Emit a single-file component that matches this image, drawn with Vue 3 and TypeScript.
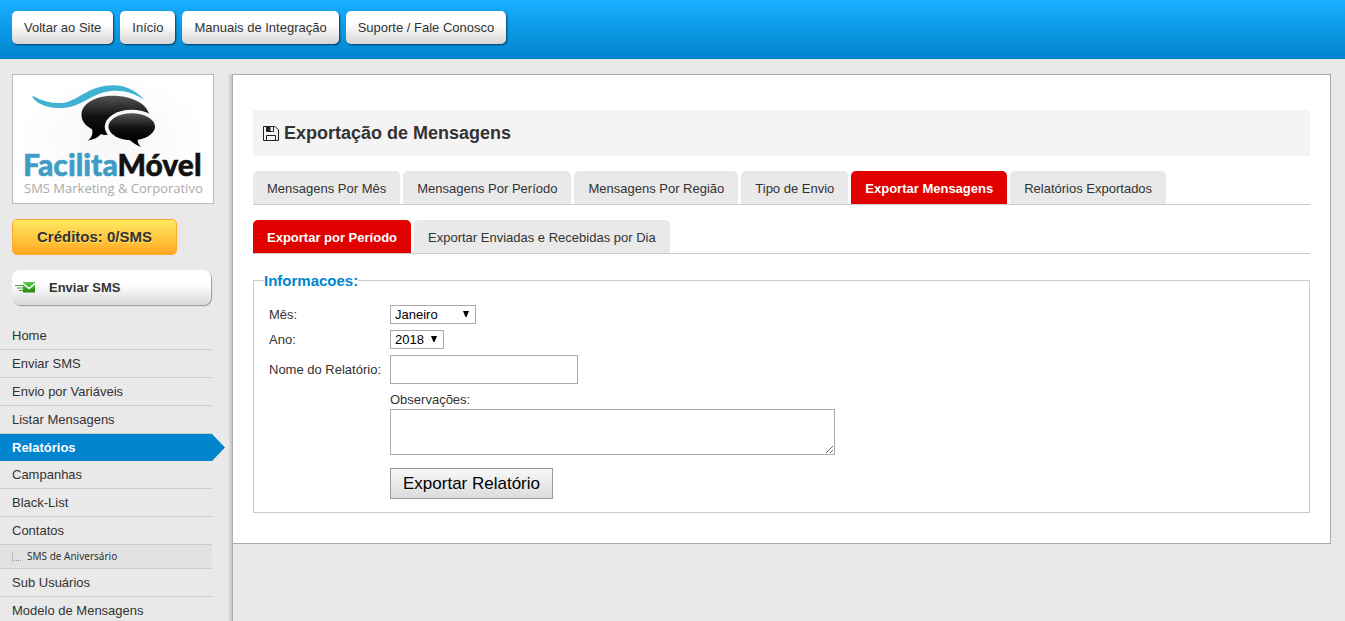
<script setup lang="ts">
import { ref } from 'vue'

interface MenuItem {
  label: string
  active?: boolean
  sub?: boolean
}

const topLinks: string[] = ['Voltar ao Site', 'Início', 'Manuais de Integração', 'Suporte / Fale Conosco']

const menu: MenuItem[] = [
  { label: 'Home' },
  { label: 'Enviar SMS' },
  { label: 'Envio por Variáveis' },
  { label: 'Listar Mensagens' },
  { label: 'Relatórios', active: true },
  { label: 'Campanhas' },
  { label: 'Black-List' },
  { label: 'Contatos' },
  { label: 'SMS de Aniversário', sub: true },
  { label: 'Sub Usuários' },
  { label: 'Modelo de Mensagens' },
]

const tabs: MenuItem[] = [
  { label: 'Mensagens Por Mês' },
  { label: 'Mensagens Por Período' },
  { label: 'Mensagens Por Região' },
  { label: 'Tipo de Envio' },
  { label: 'Exportar Mensagens', active: true },
  { label: 'Relatórios Exportados' },
]

const subTabs: MenuItem[] = [
  { label: 'Exportar por Período', active: true },
  { label: 'Exportar Enviadas e Recebidas por Dia' },
]

const months: string[] = ['Janeiro', 'Fevereiro', 'Março', 'Abril', 'Maio', 'Junho', 'Julho', 'Agosto', 'Setembro', 'Outubro', 'Novembro', 'Dezembro']
const years: string[] = ['2018', '2017', '2016']

const month = ref('Janeiro')
const year = ref('2018')
const reportName = ref('')
const notes = ref('')
</script>

<template>
  <div class="page">
    <header class="topbar">
      <a v-for="link in topLinks" :key="link" href="#" class="top-button">{{ link }}</a>
    </header>

    <div class="layout">
      <aside class="sidebar">
        <a href="#" class="logo" aria-label="Facilita Móvel">
          <svg width="200" height="128" viewBox="0 0 200 128">
            <defs>
              <linearGradient id="bubble" x1="0" y1="0" x2="0" y2="1">
                <stop offset="0" stop-color="#555" />
                <stop offset="0.55" stop-color="#111" />
                <stop offset="1" stop-color="#000" />
              </linearGradient>
              <radialGradient id="paper">
                <stop offset="0" stop-color="#f7f6f6" />
                <stop offset="1" stop-color="#fff" />
              </radialGradient>
            </defs>
            <rect width="200" height="128" fill="url(#paper)" />
            <path d="M79 54 Q81 61 75 65.500 Q84 64 88 59 Q91 60.500 95.500 59.500 L96 54 Z" fill="#000" />
            <path d="M68.500 40 C68.500 28 83 20.700 100 20.700 C119 20.700 134 29 136 39 C134 52 118 59 101 58.500 C82 58.500 68.500 51 68.500 40 Z" fill="url(#bubble)" />
            <ellipse cx="118.700" cy="51.700" rx="27" ry="17" fill="#f9f8f8" />
            <ellipse cx="118.700" cy="51.700" rx="23.300" ry="13.500" fill="url(#bubble)" />
            <path d="M115 63 Q120 69 128 72 Q124 68 124.500 62 Z" fill="#000" />
            <path d="M19.300 20.500 Q33 29 50 28 C62 26 72 16 85 12.500 C104 7.500 118 11 131.500 24.800 C118 16 104 13.500 90 17.500 C76 21.500 66 32 50 33 C34 34 20 27 19.300 20.500 Z" fill="#3fb1d1" />
            <text x="10" y="101" class="logo-name"><tspan fill="#3f9cc4" stroke="#3f9cc4">Facilita</tspan><tspan fill="#111" stroke="#111">Móvel</tspan></text>
            <text x="11" y="118" class="logo-tag">SMS Marketing &amp; Corporativo</text>
          </svg>
        </a>

        <a href="#" class="credits">Créditos: 0/SMS</a>

        <a href="#" class="send">
          <svg width="20" height="11" viewBox="0 0 20 11">
            <defs>
              <linearGradient id="mail" x1="0" y1="0" x2="0" y2="1">
                <stop offset="0" stop-color="#4fce45" />
                <stop offset="1" stop-color="#2c8512" />
              </linearGradient>
            </defs>
            <rect x="8" y="0" width="12" height="10.500" fill="url(#mail)" />
            <path d="M8 1.500 L14 6.500 L20 1.500" fill="none" stroke="#fff" stroke-width="1.500" />
            <path d="M0 3.500 H8 M2 6 H8 M4 8.500 H8" stroke="#3fa52e" stroke-width="1" />
          </svg>
          <span>Enviar SMS</span>
        </a>

        <nav class="menu">
          <a
            v-for="item in menu"
            :key="item.label"
            href="#"
            class="menu-item"
            :class="{ active: item.active, sub: item.sub }"
          >
            <i v-if="item.sub" class="branch"></i>{{ item.label }}
          </a>
        </nav>
      </aside>

      <main class="card">
        <h1 class="title">
          <svg width="16" height="15" viewBox="0 0 16 15" fill="none" stroke="#222" stroke-width="1">
            <path d="M0.500 0.500 H12 L15.500 4 V14.500 H0.500 Z" />
            <path d="M3.500 0.500 V5.500 H10.500 V0.500" />
            <path d="M4 1 H7 V5 H4 Z" fill="#222" />
            <path d="M3.500 14.500 V9.500 H12.500 V14.500" />
          </svg>
          <span>Exportação de Mensagens</span>
        </h1>

        <nav class="tabs">
          <a v-for="tab in tabs" :key="tab.label" href="#" class="tab" :class="{ active: tab.active }">{{ tab.label }}</a>
        </nav>
        <nav class="tabs">
          <a v-for="tab in subTabs" :key="tab.label" href="#" class="tab" :class="{ active: tab.active }">{{ tab.label }}</a>
        </nav>

        <form @submit.prevent>
          <fieldset class="box">
            <legend>Informacoes:</legend>
            <div class="fields">
              <label for="month">Mês:</label>
              <span class="select month">
                <select id="month" v-model="month">
                  <option v-for="m in months" :key="m">{{ m }}</option>
                </select>
                <svg width="6" height="6" viewBox="0 0 6 6"><path d="M0 0 H6 L3.500 6 H2.500 Z" fill="#000" /></svg>
              </span>

              <label for="year">Ano:</label>
              <span class="select year">
                <select id="year" v-model="year">
                  <option v-for="y in years" :key="y">{{ y }}</option>
                </select>
                <svg width="6" height="6" viewBox="0 0 6 6"><path d="M0 0 H6 L3.500 6 H2.500 Z" fill="#000" /></svg>
              </span>

              <label for="name">Nome do Relatório:</label>
              <input id="name" v-model="reportName" type="text" />

              <div class="notes">
                <label for="notes">Observações:</label>
                <textarea id="notes" v-model="notes"></textarea>
                <button type="submit">Exportar Relatório</button>
              </div>
            </div>
          </fieldset>
        </form>
      </main>
    </div>
  </div>
</template>

<style>
body {
  background: #e9e9e9;
}
</style>

<style scoped>
.page {
  height: 100vh;
  overflow: hidden;
  display: flex;
  flex-direction: column;
  background: #e9e9e9;
  color: #333;
  font: 13px/15px "Liberation Sans", Arial, sans-serif;
}

.page * {
  box-sizing: border-box;
}

a {
  color: inherit;
  text-decoration: none;
}

.topbar {
  flex: none;
  display: flex;
  gap: 7px;
  padding: 11px 12px 15px;
  background: linear-gradient(#1aafff, #0084cd);
}

.top-button {
  padding: 9px 12px;
  border-radius: 5px;
  background: linear-gradient(#fff 40%, #d5d5d5);
  box-shadow: 1px 1px 2px rgba(0, 0, 0, 0.6);
}

.layout {
  flex: 1;
  min-height: 0;
  display: flex;
  align-items: flex-start;
  padding: 15px 14px 0 0;
}

.sidebar {
  flex: none;
  align-self: stretch;
  width: 232px;
  background: linear-gradient(to left, #c4c4c4, #e9e9e9 4px);
  box-shadow: 1px 0 #aaa;
}

.logo {
  display: block;
  width: 202px;
  height: 130px;
  margin-left: 12px;
  border: 1px solid #bbb;
}

.logo svg {
  display: block;
}

.logo-name {
  font: 900 30px Lato, sans-serif;
  stroke-width: 0.5px;
}

.logo-tag {
  font: 13px "Open Sans", sans-serif;
  fill: #aaa;
}

.credits {
  display: block;
  width: 165px;
  margin: 15px 0 15px 12px;
  padding: 9px 0;
  border: 1px solid #ffa62b;
  border-radius: 5px;
  background: linear-gradient(#ffea61, #ffa922);
  font-size: 15px;
  font-weight: bold;
  line-height: 16px;
  text-align: center;
  text-shadow: 1px 1px #ffe36b;
}

.send {
  display: flex;
  align-items: center;
  gap: 14px;
  width: 199px;
  height: 35px;
  margin: 0 0 17px 12px;
  padding: 0 3px;
  border-radius: 8px;
  background: linear-gradient(#fff 40%, #d9d9d9);
  box-shadow: 1px 1px 1px #999;
  font-weight: bold;
}

.menu-item {
  display: block;
  width: 212px;
  padding: 6px 12px;
  border-bottom: 1px solid #ccc;
}

.menu-item.active {
  width: 225px;
  border: 0;
  background: #0084cd;
  clip-path: polygon(0 0, 212px 0, 100% 50%, 212px 100%, 0 100%);
  color: #fff;
  font-weight: bold;
}

.menu-item.sub {
  display: flex;
  align-items: center;
  gap: 6px;
  padding: 4px 12px;
  background: #e2e2e2;
  font-family: "Noto Sans", sans-serif;
  font-size: 10px;
}

.branch {
  width: 9px;
  height: 9px;
  border: dotted #999;
  border-width: 0 0 1px 1px;
}

.card {
  flex: 1;
  min-width: 0;
  padding: 35px 20px 30px;
  border: 1px solid #aaa;
  background: #fff;
}

.title {
  display: flex;
  align-items: center;
  gap: 5px;
  margin: 0 0 15px;
  padding: 12px 10px;
  background: #f4f4f4;
  font-size: 18px;
  line-height: 22px;
}

.tabs {
  display: flex;
  gap: 3px;
  margin-bottom: 15px;
  border-bottom: 1px solid #ccc;
}

.tab {
  padding: 10px 14px 8px;
  border-radius: 5px 5px 0 0;
  background: #e9e9e9;
}

.tab.active {
  background: #e00000;
  color: #fff;
  font-weight: bold;
}

.box {
  margin: 18px 0 0;
  padding: 16px 15px 13px;
  border: 1px solid #ccc;
}

.box legend {
  margin-left: -5px;
  padding: 0;
  color: #0084cd;
  font-size: 15px;
  font-weight: bold;
  line-height: 17px;
}

.fields {
  display: grid;
  grid-template-columns: 110px minmax(0, 1fr);
  align-items: center;
  gap: 6px 11px;
}

.fields label {
  white-space: nowrap;
}

.select {
  position: relative;
}

.select.month {
  width: 86px;
}

.select.year {
  width: 54px;
}

.select select {
  display: block;
  width: 100%;
  height: 19px;
  padding: 0 4px;
  border: 1px solid #a9a9a9;
  border-radius: 0;
  appearance: none;
  background: #fff;
  color: #000;
  font: 13px/17px "Liberation Sans", Arial, sans-serif;
}

.select svg {
  position: absolute;
  top: 6px;
  right: 7px;
  pointer-events: none;
}

input,
textarea {
  border: 1px solid #a9a9a9;
  background: #fff;
  font: 13px "Liberation Sans", Arial, sans-serif;
}

input {
  width: 188px;
  height: 29px;
  padding: 4px;
}

.notes {
  grid-column: 2;
  display: flex;
  flex-direction: column;
  align-items: flex-start;
  padding-top: 2px;
}

textarea {
  width: 445px;
  max-width: 100%;
  height: 46px;
  margin: 2px 0 13px;
}

button {
  height: 31px;
  padding: 0 12px;
  border: 1px solid #999;
  background: linear-gradient(#f8f8f8, #dcdcdc);
  color: #000;
  font: 17px "Liberation Sans", Arial, sans-serif;
}
</style>
